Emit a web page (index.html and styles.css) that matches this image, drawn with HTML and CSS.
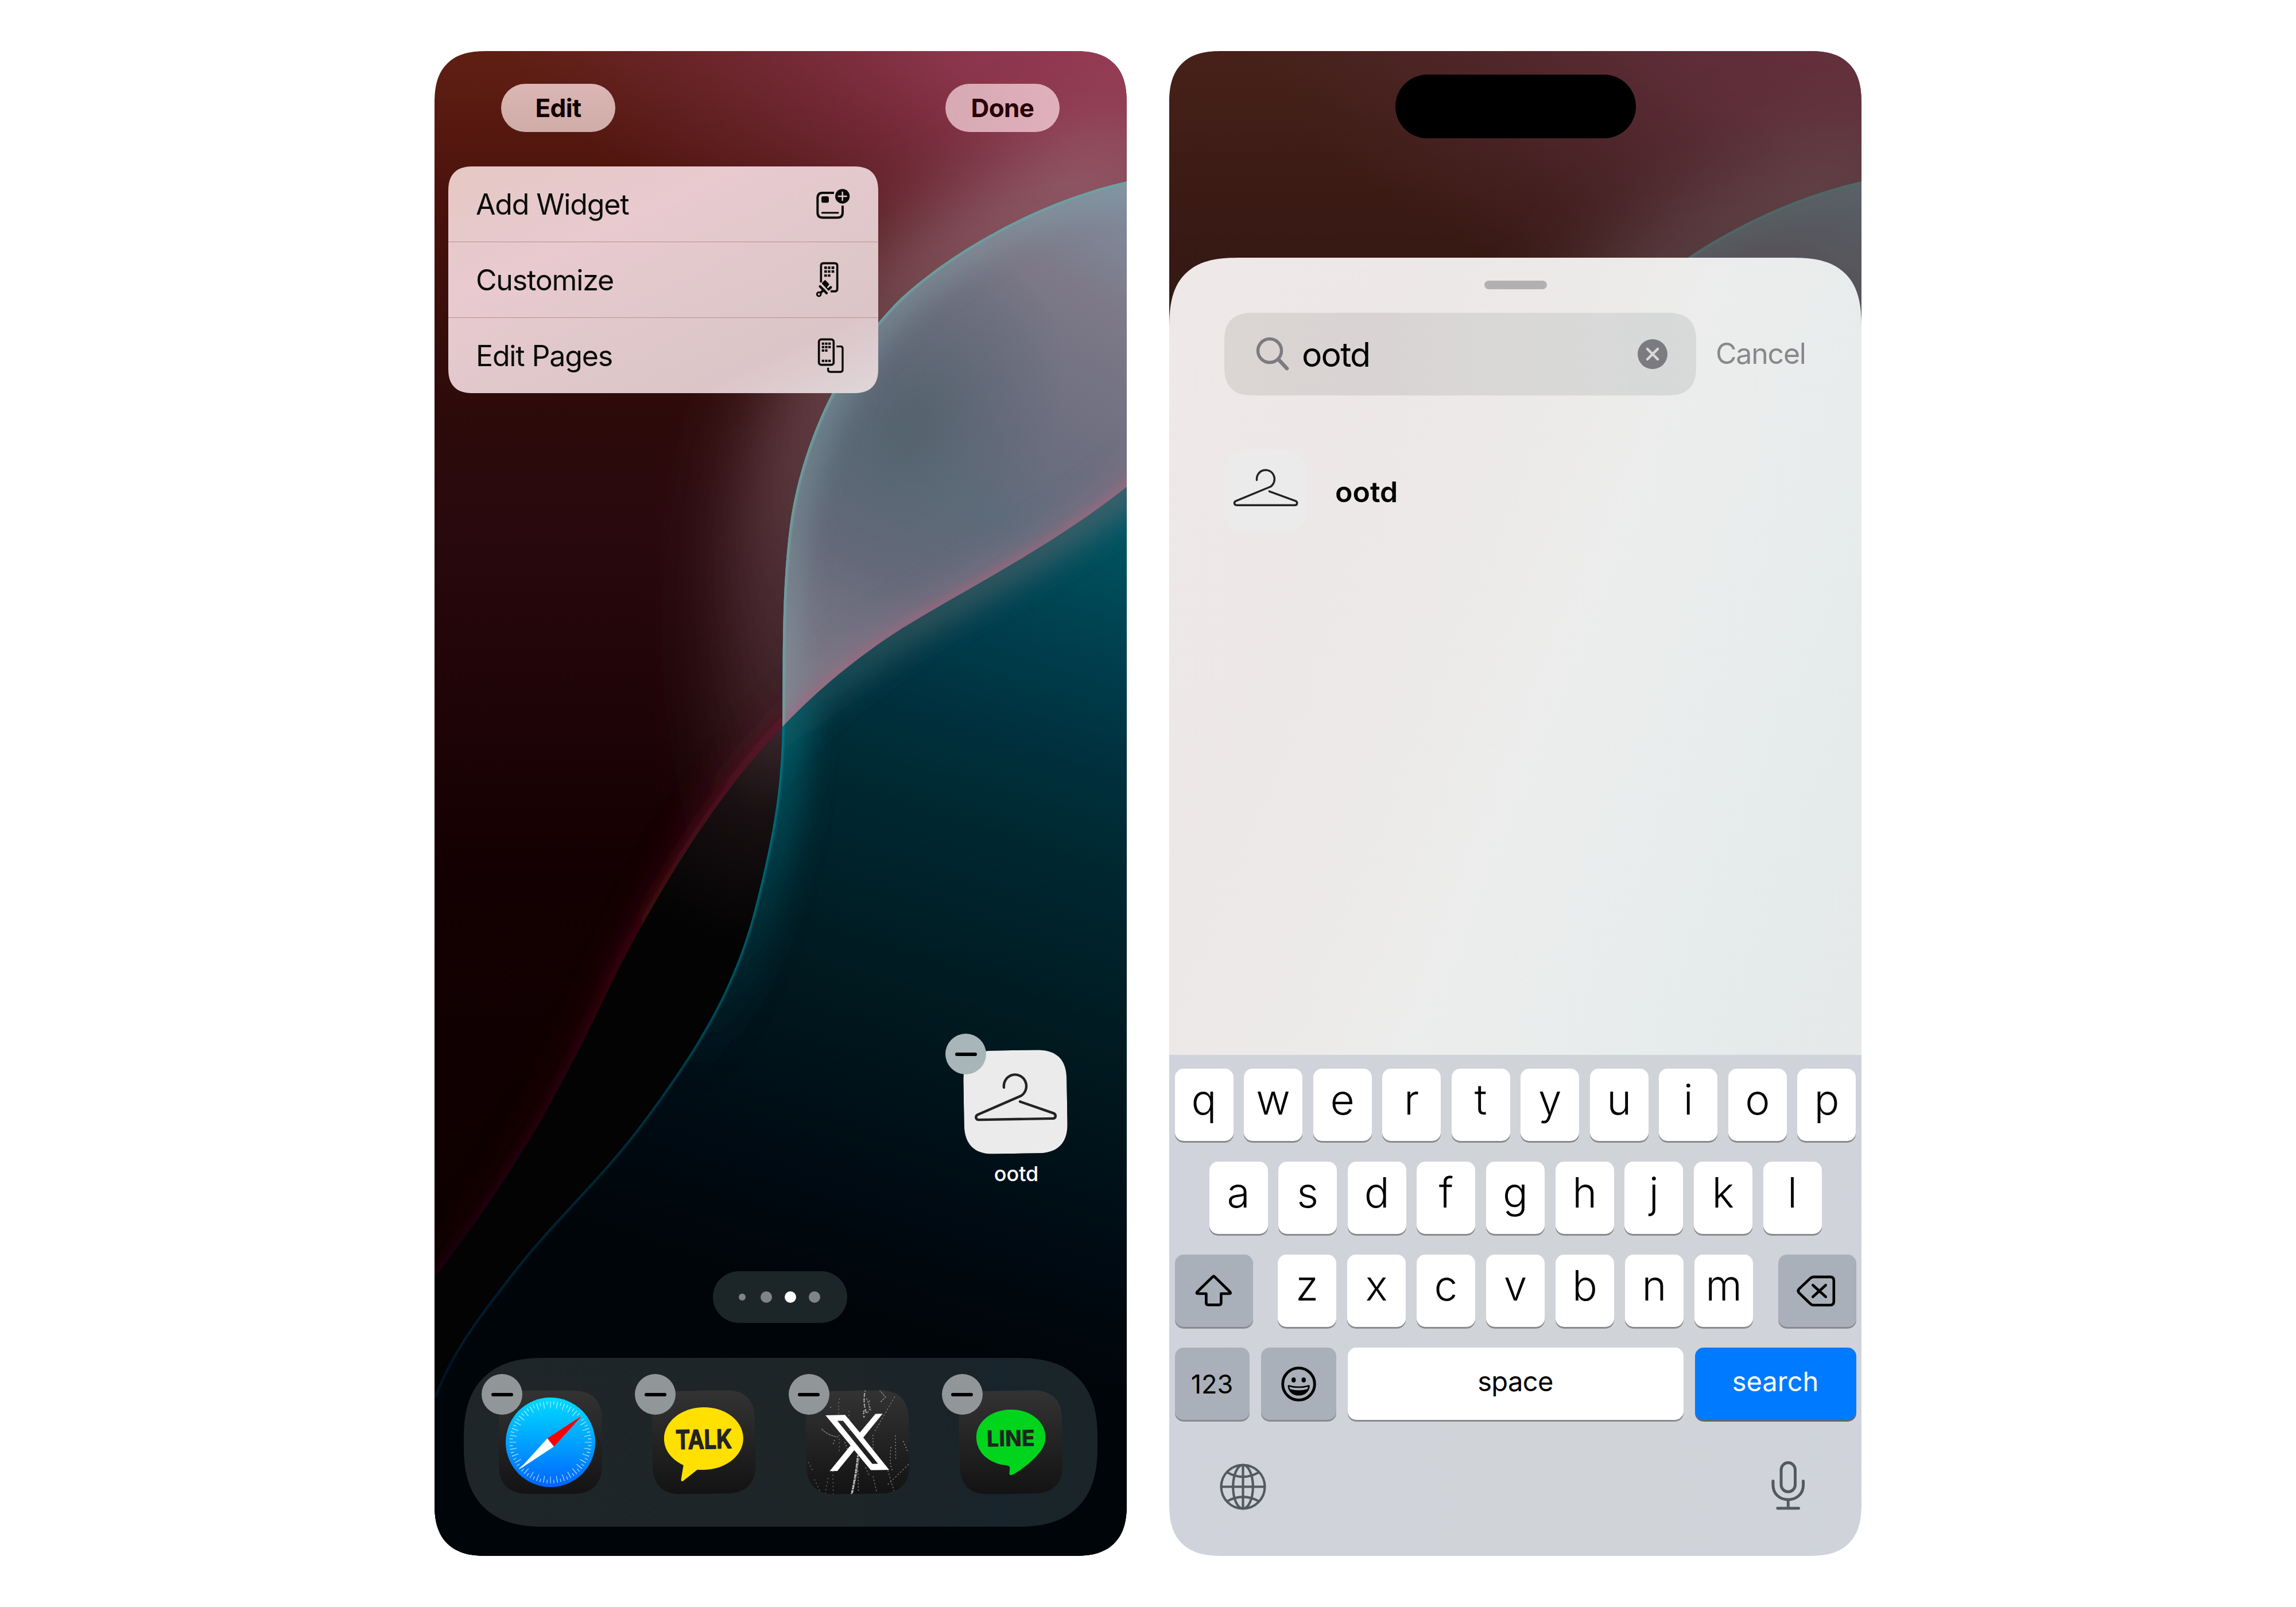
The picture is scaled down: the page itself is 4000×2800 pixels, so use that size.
FILE: index.html
```html
<!DOCTYPE html>
<html lang="en">
<head>
<meta charset="utf-8">
<title>Home Screen Widgets</title>
<link rel="stylesheet" href="styles.css">
</head>
<body>
<svg class="defs" width="0" height="0" aria-hidden="true">
  <defs>
    <path id="curve-a" d="M1260,214 L1206,227 C1050,262 900,350 813,430 C720,520 640,670 619,828 C603,950 608,1080 606,1176 C604,1290 590,1370 557,1498 C520,1640 450,1750 355,1876 C290,1962 205,2040 141,2122 C85,2194 30,2262 0,2344"/>
    <path id="curve-b" d="M1280,698 L1206,759 C1080,860 930,935 814,1006 C740,1053 670,1110 606,1177 C540,1245 470,1340 410,1440 C365,1515 340,1560 313,1615 C260,1724 250,1745 197,1843 C140,1945 70,2045 0,2138"/>
    <clipPath id="right-of-a"><path d="M1206,227 C1050,262 900,350 813,430 C720,520 640,670 619,828 C603,950 608,1080 606,1176 C604,1290 590,1370 557,1498 C520,1640 450,1750 355,1876 C290,1962 205,2040 141,2122 C85,2194 30,2262 0,2344 V2622 H1206 Z"/></clipPath>
    <clipPath id="above-b"><path d="M1206,759 C1080,860 930,935 814,1006 C740,1053 670,1110 606,1177 C540,1245 470,1340 410,1440 C365,1515 340,1560 313,1615 C260,1724 250,1745 197,1843 C140,1945 70,2045 0,2138 V0 H1206 Z"/></clipPath>
    <clipPath id="below-b"><path d="M1206,759 C1080,860 930,935 814,1006 C740,1053 670,1110 606,1177 C540,1245 470,1340 410,1440 C365,1515 340,1560 313,1615 C260,1724 250,1745 197,1843 C140,1945 70,2045 0,2138 V2622 H1206 Z"/></clipPath>
    <linearGradient id="maroon" gradientUnits="userSpaceOnUse" x1="0" y1="0" x2="0" y2="2200">
      <stop offset="0" stop-color="#611f14"/><stop offset=".12" stop-color="#4a120b"/><stop offset=".28" stop-color="#2d0b0a"/>
      <stop offset=".4" stop-color="#27080d"/><stop offset=".52" stop-color="#1f0407"/><stop offset=".65" stop-color="#130002"/><stop offset="1" stop-color="#0d0000"/>
    </linearGradient>
    <radialGradient id="pink" gradientUnits="userSpaceOnUse" cx="0" cy="0" r="1" gradientTransform="translate(1206 0) rotate(12) scale(1150 560)">
      <stop offset="0" stop-color="#963b55"/><stop offset=".3" stop-color="#8f3750" stop-opacity=".9"/><stop offset=".65" stop-color="#7c2f48" stop-opacity=".5"/><stop offset="1" stop-color="#702a40" stop-opacity="0"/>
    </radialGradient>
    <linearGradient id="halo" gradientUnits="userSpaceOnUse" x1="0" y1="200" x2="0" y2="1560">
      <stop offset="0" stop-color="#a07482" stop-opacity=".9"/><stop offset=".4" stop-color="#84606a" stop-opacity=".75"/><stop offset=".7" stop-color="#6a4c56" stop-opacity=".6"/><stop offset="1" stop-color="#40202a" stop-opacity="0"/>
    </linearGradient>
    <linearGradient id="red-edge" gradientUnits="userSpaceOnUse" x1="600" y1="1177" x2="0" y2="2138">
      <stop offset="0" stop-color="#64172c"/><stop offset=".3" stop-color="#4c0817"/><stop offset=".6" stop-color="#2e030c"/><stop offset="1" stop-color="#1c0207"/>
    </linearGradient>
    <radialGradient id="dusk" gradientUnits="userSpaceOnUse" cx="600" cy="1180" r="380">
      <stop offset="0" stop-color="#38262b"/><stop offset=".4" stop-color="#181012"/><stop offset="1" stop-color="#030303"/>
    </radialGradient>
    <linearGradient id="teal" gradientUnits="userSpaceOnUse" x1="1206" y1="800" x2="760" y2="2200">
      <stop offset="0" stop-color="#005866"/><stop offset=".08" stop-color="#004c5a"/><stop offset=".17" stop-color="#003f4e"/><stop offset=".28" stop-color="#00323f"/><stop offset=".42" stop-color="#002730"/>
      <stop offset=".62" stop-color="#001a20"/><stop offset=".85" stop-color="#000b14"/><stop offset="1" stop-color="#000509"/>
    </linearGradient>
    <linearGradient id="teal-glow" gradientUnits="userSpaceOnUse" x1="606" y1="1100" x2="440" y2="1800">
      <stop offset="0" stop-color="#006a74"/><stop offset=".45" stop-color="#004652" stop-opacity=".8"/><stop offset="1" stop-color="#002a34" stop-opacity="0"/>
    </linearGradient>
    <linearGradient id="teal-edge" gradientUnits="userSpaceOnUse" x1="600" y1="1177" x2="60" y2="2344">
      <stop offset="0" stop-color="#007684"/><stop offset=".3" stop-color="#005a68"/><stop offset=".6" stop-color="#002e3b"/><stop offset="1" stop-color="#00172c"/>
    </linearGradient>
    <linearGradient id="b-shade" gradientUnits="userSpaceOnUse" x1="1206" y1="759" x2="606" y2="1177">
      <stop offset="0" stop-color="#44636d"/><stop offset=".6" stop-color="#30525a"/><stop offset="1" stop-color="#165a64" stop-opacity=".6"/>
    </linearGradient>
    <linearGradient id="slate" gradientUnits="userSpaceOnUse" x1="1206" y1="227" x2="700" y2="1100">
      <stop offset="0" stop-color="#8190a0"/><stop offset=".2" stop-color="#7d7988"/><stop offset=".45" stop-color="#6d6e7f"/><stop offset=".62" stop-color="#5f6c7b"/><stop offset=".8" stop-color="#676a7a"/><stop offset="1" stop-color="#7a7786"/>
    </linearGradient>
    <radialGradient id="slate-dark" gradientUnits="userSpaceOnUse" cx="0" cy="0" r="1" gradientTransform="translate(830 650) rotate(-62) scale(330 250)">
      <stop offset="0" stop-color="#54626d" stop-opacity=".95"/><stop offset="1" stop-color="#5a6874" stop-opacity="0"/>
    </radialGradient>
    <filter id="blur-l" filterUnits="userSpaceOnUse" x="-300" y="-300" width="1800" height="3200"><feGaussianBlur stdDeviation="80"/></filter>
    <filter id="blur-m" filterUnits="userSpaceOnUse" x="-300" y="-300" width="1800" height="3200"><feGaussianBlur stdDeviation="26"/></filter>
    <filter id="blur-s" filterUnits="userSpaceOnUse" x="-300" y="-300" width="1800" height="3200"><feGaussianBlur stdDeviation="9"/></filter>
    <filter id="blur-xs" filterUnits="userSpaceOnUse" x="-300" y="-300" width="1800" height="3200"><feGaussianBlur stdDeviation="1.6"/></filter>
    <symbol id="wallpaper" viewBox="0 0 1206 2622">
      <rect width="1206" height="2622" fill="url(#maroon)"/>
      <rect width="1206" height="1200" fill="url(#pink)"/>
      <use href="#curve-a" fill="none" stroke="url(#halo)" stroke-width="150" filter="url(#blur-l)"/>
      <use href="#curve-b" fill="none" stroke="url(#red-edge)" stroke-width="44" opacity=".5" filter="url(#blur-m)"/>
      <use href="#curve-b" fill="none" stroke="url(#red-edge)" stroke-width="16" filter="url(#blur-s)"/>
      <g clip-path="url(#below-b)"><rect width="1206" height="2622" fill="url(#dusk)"/></g>
      <g clip-path="url(#right-of-a)">
        <rect width="1206" height="2622" fill="url(#teal)"/>
        <use href="#curve-a" fill="none" stroke="url(#teal-glow)" stroke-width="90" opacity=".85" filter="url(#blur-m)"/>
        <use href="#curve-b" fill="none" stroke="url(#b-shade)" stroke-width="62" filter="url(#blur-m)"/>
        <use href="#curve-a" fill="none" stroke="url(#teal-edge)" stroke-width="8" filter="url(#blur-xs)"/>
        <g clip-path="url(#above-b)">
          <rect width="1206" height="1300" fill="url(#slate)"/>
          <rect width="1206" height="1300" fill="url(#slate-dark)"/>
          <use href="#curve-a" fill="none" stroke="#83a0a6" stroke-width="50" opacity=".55" filter="url(#blur-m)"/>
          <use href="#curve-b" fill="none" stroke="#94748a" stroke-width="50" opacity=".5" filter="url(#blur-m)"/>
          <use href="#curve-b" fill="none" stroke="#a8657b" stroke-width="12" opacity=".85" filter="url(#blur-s)"/>
          <use href="#curve-a" fill="none" stroke="#70a2a0" stroke-width="9" opacity=".8" filter="url(#blur-xs)"/>
        </g>
      </g>
    </symbol>
    <symbol id="hanger" viewBox="-90 -90 180 180">
      <path d="M-19.6,-25.5 A19.6,20 0 1 1 10.6,-10.8 L-65.6,20.8 C-71,23.5 -70,30 -64,30 H64.5 C70.5,30 71,23 66,20.8 L8,-.5" fill="none" stroke="#232323" stroke-width="4.4" stroke-linecap="round" stroke-linejoin="round"/>
    </symbol>
    <linearGradient id="safari-blue" x1="0" y1="0" x2="0" y2="1"><stop offset="0" stop-color="#00dcff"/><stop offset=".5" stop-color="#00a2ff"/><stop offset="1" stop-color="#0064ff"/></linearGradient>
  </defs>
</svg>

<main class="stage">
  <section class="phone home">
    <svg class="wall" viewBox="0 0 1206 2622"><use href="#wallpaper"/></svg>
    <header class="topbar">
      <button class="pill pill-edit">Edit</button>
      <button class="pill pill-done">Done</button>
    </header>
    <nav class="menu">
      <div class="menu-row"><span>Add Widget</span>
        <svg class="mi-add" viewBox="120 80 186 164">
          <path d="M219 104 H160 Q133 104 133 131 V207 Q133 234 160 234 H237 Q264 234 264 207 V171" fill="none" stroke="#0a0a0a" stroke-width="12"/>
          <rect x="153" y="122" width="39" height="34" rx="10" fill="#0a0a0a"/>
          <path d="M157 208 H240" stroke="#0a0a0a" stroke-width="9" stroke-linecap="round"/>
          <circle cx="263" cy="122" r="38" fill="#0a0a0a"/>
          <path d="M263 101 V143 M242 122 H284" stroke="#e8cbd0" stroke-width="7" stroke-linecap="round"/>
        </svg>
      </div>
      <div class="menu-row"><span>Customize</span>
        <svg class="mi-custom" viewBox="120 480 140 195">
          <path d="M154 592 V504 Q154 491 167 491 H226 Q239 491 239 504 V625 Q239 638 226 638 H204" fill="none" stroke="#0a0a0a" stroke-width="11"/>
          <path fill="#0a0a0a" d="M171 508h14v13h-14z M190 508h13v13h-13z M209 508h14v13h-14z M171 528h14v13h-14z M190 528h13v13h-13z M209 528h14v13h-14z M171 549h14v13h-14z M190 549h13v13h-13z"/>
          <g fill="#0a0a0a" stroke="#0a0a0a" stroke-linejoin="round" stroke-linecap="round">
            <path d="M175 582 L194 601 L182 615 L162 596 Z" stroke-width="6"/>
            <path d="M162 597 L190 625 L204 612 Q212 613 208 620 L194 632 Z" stroke-width="5"/>
            <path d="M149 612 L183 647" stroke-width="13"/>
            <path d="M168 630 L145 652" stroke-width="13"/>
            <circle cx="143" cy="653" r="12" stroke-width="5"/>
          </g>
          <path d="M153 604 L193 642" stroke="#e0cacd" stroke-width="4"/>
          <circle cx="143" cy="653" r="5.5" fill="#e0cacd"/>
        </svg>
      </div>
      <div class="menu-row"><span>Edit Pages</span>
        <svg class="mi-pages" viewBox="125 865 150 190">
          <rect x="139" y="875" width="77" height="133" rx="12" fill="none" stroke="#0a0a0a" stroke-width="11"/>
          <path d="M231 912 H252 Q263 912 263 923 V1034 Q263 1045 252 1045 H198 Q187 1045 187 1034 V1023" fill="none" stroke="#0a0a0a" stroke-width="10"/>
          <path fill="#0a0a0a" d="M154 891h13v12h-13z M171 891h13v12h-13z M188 891h13v12h-13z M154 909h13v12h-13z M171 909h13v12h-13z M188 909h13v12h-13z M154 927h13v12h-13z M171 927h13v12h-13z M154 981h13v12h-13z M171 981h13v12h-13z M188 981h13v12h-13z"/>
        </svg>
      </div>
    </nav>

    <div class="app app-ootd">
      <svg class="tile tile-ootd"><use href="#hanger"/></svg>
      <span class="remove"></span>
      <span class="app-label">ootd</span>
    </div>

    <div class="dots"><i class="dot small"></i><i class="dot"></i><i class="dot on"></i><i class="dot"></i></div>

    <footer class="dock">
      <div class="app">
        <svg class="tile tile-dark" viewBox="-90 -90 180 180">
          <circle r="78" fill="url(#safari-blue)"/>
          <g fill="none" stroke="#dff6ff" stroke-opacity=".85"><circle r="65.5" stroke-width="12" pathLength="360" stroke-dasharray="1 9" stroke-dashoffset=".5"/>
          <circle r="68.6" stroke-width="6" pathLength="360" stroke-dasharray="1 9" stroke-dashoffset="5.5"/></g>
          <path d="M55.5,-46.7 L-5.5,-6.7 L6,7.5 Z" fill="#ff0000"/>
          <path d="M-54.7,47.5 L-5.5,-6.7 L6,7.5 Z" fill="#fff"/>
        </svg>
        <span class="remove"></span>
      </div>
      <div class="app">
        <svg class="tile tile-dark tilt" viewBox="-90 -90 180 180">
          <path d="M0,-61 C38,-61 69,-37 69,-6.500 C69,24 38,48 0,48 Q-6,48 -12,47.500 L-37,66.500 Q-41,69 -40.500,64 L-36,39.500 C-57,29 -69,12 -69,-6.500 C-69,-37 -38,-61 0,-61 Z" fill="#ffe000"/>
          <text class="talk" x="0" y="11" text-anchor="middle" textLength="98" lengthAdjust="spacingAndGlyphs">TALK</text>
        </svg>
        <span class="remove"></span>
      </div>
      <div class="app">
        <svg class="tile tile-dark tilt" viewBox="-90 -90 180 180">
          <g fill="none" stroke="#fff" stroke-linecap="round">
            <path d="M15,-90 Q10,-70 16,-52 Q10,-60 12,-44" stroke-width="2.600" stroke-dasharray=".5 5 1 3" opacity=".6"/>
            <path d="M22,-72 Q18,-62 26,-54 M40,-90 L50,-78 L42,-70 M17,-76 L23,-60 L18,-50" stroke-width="1.500" stroke-dasharray="2 3" opacity=".45"/>
            <path d="M66,-78 L30,-18" stroke-width="1.200" stroke-dasharray="2 4" opacity=".4"/>
            <path d="M-62,-24 Q-50,-12 -34,-10" stroke-width="1.300" stroke-dasharray="3 2" opacity=".45"/>
            <path d="M0,24 Q-4,56 -12,90" stroke-width="3" stroke-dasharray=".5 4 2 3" opacity=".7"/>
            <path d="M2,28 Q-3,60 -10,88" stroke-width="1.200" stroke-dasharray="5 2" opacity=".55"/>
            <path d="M88,40 L50,76 M26,60 L32,88 M13,44 L20,60 M52,50 L62,86" stroke-width="1.200" stroke-dasharray="2 4" opacity=".45"/>
            <path d="M-30,-76 Q-34,-68 -31,-60 M-46,-62 L-42,-58 M-32,-58 V20 M-14,-54 V-20 M-44,50 V90 M-58,88 L-52,60 M-76,64 L-66,86 M-86,34 L-78,50" stroke-width="1.500" stroke-dasharray=".5 6" opacity=".45"/>
            <path d="M27,-12 V20 M58,10 Q54,40 60,50 M66,-10 V30 M-40,-4 L-44,6 M-22,0 L-18,12 M0,50 V84 M80,0 L88,20" stroke-width="1.800" stroke-dasharray=".5 5" opacity=".45"/>
          </g>
          <path fill-rule="evenodd" fill="#fff" d="M-55,-48 H-20.900 L4.300,-17 L32,-49 H44.500 L10.100,-8 L54.200,49 H22.200 L-6,13.700 L-36,49.500 H-49.500 L-12.300,5.300 Z M-34.600,-38 L25,38 H35 L-24.700,-38 Z"/>
        </svg>
        <span class="remove"></span>
      </div>
      <div class="app">
        <svg class="tile tile-dark tilt" viewBox="-90 -90 180 180">
          <path d="M0,-57 C34,-57 60.500,-36 60.500,-9 C60.500,5 55,13 46,23 C33,37 15,50 2,56.500 Q-4,59 -3.500,53 L-2.500,47 Q-1.500,40.500 -8,40 C-38,37 -60,17 -60,-9 C-60,-36 -34,-57 0,-57 Z" fill="#00d41d"/>
          <text class="line" x="0" y="7" text-anchor="middle" textLength="84" lengthAdjust="spacingAndGlyphs">LINE</text>
        </svg>
        <span class="remove"></span>
      </div>
    </footer>
  </section>

  <section class="phone search">
    <svg class="wall" viewBox="0 0 1206 2622"><use href="#wallpaper"/></svg>
    <div class="dim"></div>
    <div class="island"></div>
    <div class="sheet">
      <div class="grabber"></div>
      <div class="search-row">
        <div class="field">
          <svg class="lens" width="58" height="60" viewBox="0 0 58 60"><circle cx="24" cy="24" r="20.500" fill="none" stroke="#7c7b80" stroke-width="5.500"/><path d="M39.500 39.500 L54 55" stroke="#7c7b80" stroke-width="6.500" stroke-linecap="round"/></svg>
          <span class="query">ootd</span>
          <svg class="clear" width="52" height="52" viewBox="-26 -26 52 52"><circle r="26" fill="#7c7b80"/><path d="M-9 -9 L9 9 M9 -9 L-9 9" stroke="#dadad9" stroke-width="4.500" stroke-linecap="round"/></svg>
        </div>
        <span class="cancel">Cancel</span>
      </div>
      <div class="result">
        <svg class="result-icon"><use href="#hanger"/></svg>
        <span class="result-name">ootd</span>
      </div>
    </div>
    <div class="keyboard">
      <div class="row"><b>q</b><b>w</b><b>e</b><b>r</b><b>t</b><b>y</b><b>u</b><b>i</b><b>o</b><b>p</b></div>
      <div class="row row2"><b>a</b><b>s</b><b>d</b><b>f</b><b>g</b><b>h</b><b>j</b><b>k</b><b>l</b></div>
      <div class="row row3">
        <span class="key fn wide"><svg width="66.7" height="57.300" viewBox="155 120 200 172"><path d="M250 134 Q255 129 260 134 L341 213 Q347 222 337 222 H294 V270 Q294 281 283 281 H227 Q216 281 216 270 V222 H173 Q163 222 169 213 Z" fill="none" stroke="#000" stroke-width="14" stroke-linejoin="round"/></svg></span>
        <div class="letters"><b>z</b><b>x</b><b>c</b><b>v</b><b>b</b><b>n</b><b>m</b></div>
        <span class="key fn wide"><svg class="del" width="71" height="58.500" viewBox="210 115 206 170"><path d="M302 129 H385 Q404 129 404 147 V254 Q404 272 385 272 H302 Q293 272 286 266 L228 210 Q219 200 228 190 L286 135 Q293 129 302 129 Z M298 171 L363 230 M363 171 L298 230" fill="none" stroke="#000" stroke-width="13.500" stroke-linecap="round"/></svg></span>
      </div>
      <div class="row row4">
        <span class="key fn num">123</span>
        <span class="key fn emoji"><svg width="61" height="61" viewBox="603 602 182 182"><circle cx="694" cy="693" r="83" fill="none" stroke="#000" stroke-width="14.500"/><ellipse cx="668" cy="672" rx="11" ry="13"/><ellipse cx="720" cy="672" rx="11" ry="13"/><path d="M637 704 Q637 697 645 699 Q694 712 743 699 Q752 697 752 704 C748 735 725 753 694 753 C664 753 641 735 637 704 Z"/><path d="M645 707 Q694 720 743 707 L740 719 Q694 732 649 719 Z" fill="#a9b0ba"/></svg></span>
        <span class="key space">space</span>
        <span class="key go">search</span>
      </div>
      <div class="tray">
        <svg width="81" height="81" viewBox="283.500 1110.500 243 243"><g fill="none" stroke="#54585f" stroke-width="12.500"><circle cx="405" cy="1232" r="114"/><ellipse cx="405" cy="1232" rx="52" ry="114"/><path d="M405 1118 V1346 M291 1232 H519 M323 1157 Q405 1203 487 1157 M323 1307 Q405 1263 487 1307"/></g></svg>
        <svg class="mic" width="58.500" height="85.400" viewBox="81.500 1059.500 170 248"><g fill="none" stroke="#54585f" stroke-width="14.500" stroke-linecap="round"><rect x="131" y="1067" width="71" height="147" rx="35.500"/><path d="M90 1160 V1180 C90 1225 124 1254 166.500 1254 C209 1254 243 1225 243 1180 V1160 M166.500 1254 V1298 M113 1298 H220"/></g></svg>
      </div>
    </div>
  </section>
</main>
</body>
</html>
```
FILE: styles.css
```css
* { box-sizing: border-box; }

body {
  margin: 0;
  background: #fff;
  font-family: Inter, "Liberation Sans", sans-serif;
  color: #000;
}

.defs { position: absolute; }

.stage {
  width: 4000px;
  height: 2800px;
  display: flex;
  justify-content: center;
  align-items: center;
  gap: 74px;
}

.phone {
  position: relative;
  isolation: isolate;
  width: 1206px;
  height: 2622px;
  overflow: hidden;
  border-radius: 78px;
  display: flex;
  flex-direction: column;
}

.wall {
  position: absolute;
  inset: 0;
  width: 1206px;
  height: 2622px;
  z-index: -2;
}

/* Home screen */
.topbar {
  display: flex;
  justify-content: space-between;
  padding: 57px 117px 0 116px;
}

.pill {
  width: 199px;
  height: 84px;
  border: 0;
  border-radius: 42px;
  font: 700 44px/84px Inter, "Liberation Sans", sans-serif;
  letter-spacing: -.6px;
  padding: 0 0 2px;
}
.pill-edit { background: linear-gradient(#dbb6b4, #d0aca8); color: #120000; }
.pill-done { background: linear-gradient(90deg, #d6a9b3, #e0b0bc); color: #280006; }

.menu {
  position: absolute;
  left: 24px;
  top: 201px;
  width: 749px;
  height: 395px;
  border-radius: 36px;
  overflow: hidden;
  background: linear-gradient(155deg, #e5c8c3 0%, #e8cad0 32%, #dfc7ca 62%, #dcc5c8 80%, #dfd6d9 100%);
  display: grid;
  grid-template-rows: 132px 132px 131px;
}
.menu-row {
  display: flex;
  align-items: center;
  justify-content: space-between;
  padding: 0 48px 0 48px;
  font-size: 50px;
  letter-spacing: -1.150px;
  color: #0a0a0a;
  border-bottom: 1.500px solid #b98f93;
}
.menu-row:last-child { border-bottom: 0; }
.mi-add { width: 62px; height: 54.700px; }
.mi-custom { width: 46.700px; height: 65px; margin-right: 16px; }
.mi-pages { width: 50px; height: 63.300px; margin-right: 10px; }

.app { position: relative; width: 180px; }
.tile {
  display: block;
  width: 180px;
  height: 180px;
  border-radius: 42px;
}
.tile-ootd { background: #ebebeb; transform: rotate(-1deg); }
.tile-dark { background: linear-gradient(#333, #131313); }
.tilt { transform: rotate(-1deg); }

.remove {
  position: absolute;
  left: -30px;
  top: -29px;
  width: 71px;
  height: 71px;
  border-radius: 50%;
  background: #919799;
  display: grid;
  place-items: center;
}
.remove::after {
  content: "";
  width: 38px;
  height: 6px;
  border-radius: 3px;
  background: #000;
}
.app-ootd .remove { background: #a8b5b9; left: -32px; }

.app-ootd {
  margin: auto 104px 0 0;
  align-self: flex-end;
  display: flex;
  flex-direction: column;
  align-items: center;
}
.app-label {
  margin: 15px 0 0 3px;
  font-size: 36px;
  line-height: 40px;
  font-weight: 500;
  color: #fff;
}

.dots {
  align-self: center;
  margin: 150px 2px 0 0;
  width: 234px;
  height: 90px;
  border-radius: 45px;
  background: #1c2628;
  display: flex;
  align-items: center;
  justify-content: center;
  padding-right: 3px;
  gap: 22px;
}
.dot { width: 20px; height: 20px; border-radius: 50%; background: #7f8587; }
.dot.small { width: 12px; height: 12px; margin-right: 4px; }
.dot.on { background: #fff; }

.dock {
  margin: 61px 51px 51px;
  height: 294px;
  border-radius: 118px;
  background: linear-gradient(90deg, #1e2629 0%, #1d2527 60%, #18242b 85%, #1b2528 100%);
  padding: 57px 61px 0 61px;
  display: flex;
  justify-content: space-between;
}

.talk {
  font: 600 45px Inter, sans-serif;
  fill: #232323;
  stroke: #232323;
  stroke-width: 2px;
  stroke-linejoin: round;
}
.line { font: 800 39px Inter, sans-serif; fill: #1e2420; }

/* Search screen: only the strip above the sheet shows the wallpaper */
.search .wall { clip-path: inset(0 0 1900px 0); }
.dim {
  position: absolute;
  inset: 0 0 1900px;
  z-index: -1;
  background: rgba(42, 37, 32, .46);
}
.island {
  align-self: center;
  margin-top: 41px;
  width: 419px;
  height: 111px;
  border-radius: 56px;
  background: #000;
}
.sheet {
  margin-top: 208px;
  height: 1389px;
  border-radius: 98px 98px 0 0;
  background: linear-gradient(112deg, #eee9e8 0%, #ece8e7 28%, #eceae9 42%, #ebedec 58%, #e8ecec 74%, #e5eaeb 88%, #e7e9e9 100%);
  display: flex;
  flex-direction: column;
}
.grabber {
  align-self: center;
  margin-top: 40px;
  width: 109px;
  height: 15px;
  border-radius: 8px;
  background: #b2b0b0;
}
.search-row {
  margin: 41px 0 0 96px;
  display: flex;
  align-items: center;
}
.field {
  width: 822px;
  height: 144px;
  border-radius: 42px;
  background: linear-gradient(90deg, #dad6d3, #d9d3d3 30%, #d9d8d7 60%, #d7dad9);
  display: flex;
  align-items: center;
  padding: 0 50px 0 55px;
}
.query { margin-left: 22px; font-size: 59px; letter-spacing: -1.800px; }
.clear { margin-left: auto; }
.cancel { margin-left: 34px; padding-bottom: 3px; font-size: 50px; letter-spacing: -1.200px; color: #88888b; }
.result {
  margin: 96px 0 0 97px;
  display: flex;
  align-items: center;
}
.result-icon {
  width: 142px;
  height: 143px;
  border-radius: 34px;
  background: #ebebeb;
}
.result-name { margin-left: 50px; font-size: 50px; font-weight: 600; }

.keyboard {
  flex: 1;
  padding: 24px 9.500px 0;
  background: linear-gradient(90deg, #d0d3db 0%, #d0d3da 25%, #d0d4d8 45%, #d0d4d8 70%, #d0d3db 100%);
  display: flex;
  flex-direction: column;
  gap: 36px;
}
.row, .letters { display: flex; justify-content: space-between; height: 126px; }
.row2 { padding: 0 60px; }
.letters { width: 828px; }
.row4 { gap: 20px; }

.row b, .key {
  height: 126px;
  border-radius: 15px;
  background: #fff;
  box-shadow: 0 3px 0 #898a8d;
  display: flex;
  align-items: center;
  justify-content: center;
}
.row b {
  width: 102px;
  padding-bottom: 19px;
  font-size: 73px;
  font-weight: 300;
}
.key { font-size: 47px; }
.key.fn { background: #a9b0ba; }
.wide { width: 136px; }
.del { margin-right: 5px; }
.num { width: 130px; }
.emoji { width: 131px; }
.key.num { font-size: 45px; }
.space { flex: 1; padding-bottom: 10px; letter-spacing: -.600px; }
.key.go { width: 281px; padding-bottom: 10px; background: #007aff; color: #fff; box-shadow: 0 3px 0 #63676d; }

.tray {
  display: flex;
  justify-content: space-between;
  align-items: center;
  margin-top: 38px;
  padding: 0 89px 0 78px;
}
.mic { position: relative; top: -2px; }

@supports (corner-shape: superellipse(1.4)) {
  .phone { border-radius: 92px; corner-shape: superellipse(1.35); }
  .sheet { border-radius: 125px 125px 0 0; corner-shape: superellipse(1.45); }
  .menu { border-radius: 44px; corner-shape: superellipse(1.35); }
  .tile { border-radius: 56px; corner-shape: superellipse(1.4); }
  .dock { border-radius: 140px; corner-shape: superellipse(1.3); }
  .field { border-radius: 50px; corner-shape: superellipse(1.35); }
}
```
